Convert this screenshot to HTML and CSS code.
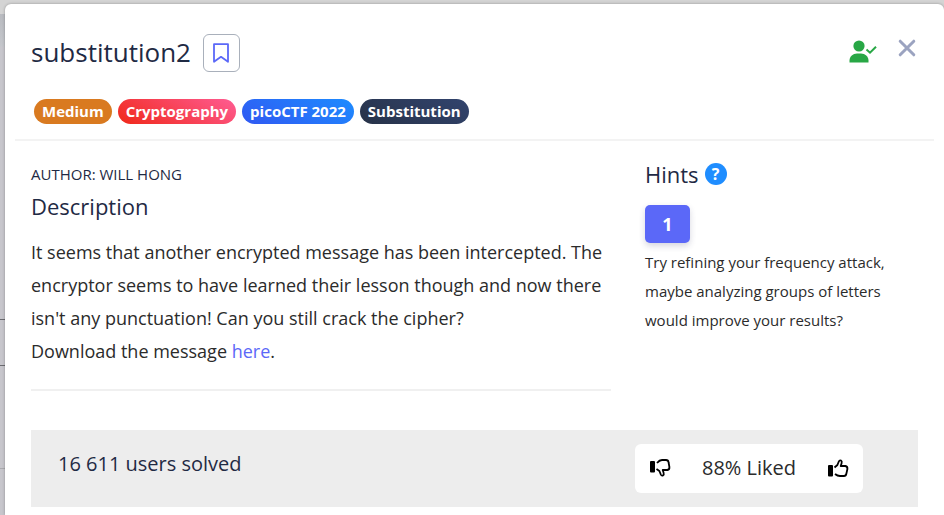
FILE: index.html
```html
<!DOCTYPE html>
<html lang="en">
<head>
<meta charset="utf-8">
<meta name="viewport" content="width=device-width, initial-scale=1">
<title>substitution2</title>
<link rel="stylesheet" href="styles.css">
</head>
<body>
<main class="modal">
  <header class="modal-header">
    <div class="title-row">
      <h1 class="title">substitution2</h1>
      <button class="bookmark" type="button" aria-label="Bookmark">
        <svg width="16" height="20" viewBox="0 0 16 20" fill="none" stroke="currentColor" stroke-width="1.8" stroke-linejoin="round"><path d="M1 1.2h14v17.6l-7-5-7 5z"/></svg>
      </button>
      <div class="header-actions">
        <svg class="solved" width="28" height="23" viewBox="0 0 28 23" role="img" aria-label="Solved"><circle cx="10" cy="6" r="5.6" fill="currentColor"/><path d="M0.5 22.5v-2c0-4 3.500-7 7.500-7h4c4 0 7.500 3 7.500 7v2z" fill="currentColor"/><path d="M17.500 9.500l3.500 3.200 6-6" fill="none" stroke="currentColor" stroke-width="2"/></svg>
        <button class="close" type="button" aria-label="Close">
          <svg width="18" height="18" viewBox="0 0 18 18" fill="none" stroke="currentColor" stroke-width="3" stroke-linecap="round"><path d="M2.200 2.200l13.600 13.600M15.800 2.200L2.200 15.800"/></svg>
        </button>
      </div>
    </div>
    <div class="tags">
      <span class="tag tag-medium">Medium</span>
      <span class="tag tag-category">Cryptography</span>
      <span class="tag tag-event">picoCTF 2022</span>
      <span class="tag tag-topic">Substitution</span>
    </div>
  </header>
  <div class="content">
    <section class="details">
      <p class="author">AUTHOR: WILL HONG</p>
      <h2 class="heading">Description</h2>
      <p class="description">It seems that another encrypted message has been intercepted. The encryptor seems to have learned their lesson though and now there isn't any punctuation! Can you still crack the cipher?<br>Download the message <a href="#">here</a>.</p>
    </section>
    <aside class="hints">
      <h2 class="heading hints-heading">Hints <span class="help">?</span></h2>
      <button class="hint-number" type="button">1</button>
      <p class="hint-text">Try refining your frequency attack, maybe analyzing groups of letters would improve your results?</p>
    </aside>
  </div>
  <footer class="stats">
    <p class="solves">16 611 users solved</p>
    <div class="rating">
      <button class="vote" type="button" aria-label="Dislike">
        <svg width="22" height="20" viewBox="0 0 22 20"><rect x="1" y="3" width="5" height="11.500" rx="1" fill="currentColor"/><path d="M8 5q2.500-3 5-3h4q2.300 0 2.600 2.500l.8 4.500q.3 2.500-2 3h-4.700l.9 2.800q.6 2-.6 2.700-1.500.6-2.200-1L10.400 13 7.500 11" fill="none" stroke="currentColor" stroke-width="1.800" stroke-linejoin="round"/></svg>
      </button>
      <span>88% Liked</span>
      <button class="vote" type="button" aria-label="Like">
        <svg width="22" height="20" viewBox="0 0 22 20"><rect x="1" y="7" width="5" height="11.500" rx="1" fill="currentColor"/><path d="M8 16q2.500 2 5 2h4q2 0 2.400-2.500l1-4.500q.3-2.500-2-3h-4.700l.9-2.800q.6-2-.6-2.700-1.500-.6-2.200 1L10.400 7 7.500 9.500" fill="none" stroke="currentColor" stroke-width="1.800" stroke-linejoin="round"/></svg>
      </button>
    </div>
  </footer>
</main>
</body>
</html>
```
FILE: styles.css
```css
* { box-sizing: border-box; }

body {
  margin: 0;
  min-height: 100vh;
  padding: 4px 0 0 5px;
  display: flex;
  background:
    linear-gradient(#6b6b70, #6b6b70) 0 319px / 5px 1px no-repeat,
    linear-gradient(#6b6b70, #6b6b70) 0 365px / 5px 1px no-repeat,
    linear-gradient(#aaaaae, #aaaaae) 0 468px / 5px 1px no-repeat,
    linear-gradient(#d4d4d4 0 14px, #b9bbc0 14px, #c4c6cb 46px, #c7c6cc 47px);
  color: #1f2a44;
  font-family: "Open Sans", "Noto Sans", sans-serif;
}

h1, h2, p { margin: 0; font-weight: 400; }

button {
  padding: 0;
  border: 0;
  background: none;
  color: inherit;
  font: inherit;
  cursor: pointer;
}

svg { display: block; }

.modal {
  flex: 1;
  padding: 0 10px 8px;
  border-radius: 6px 6px 0 0;
  background: #fff;
  box-shadow: 0 0 3px rgba(0, 0, 0, 0.3);
}

.modal-header {
  padding: 30px 16px 15px;
  border-bottom: 2px solid #f3f3f3;
}

.title-row {
  display: flex;
  align-items: center;
  gap: 12px;
}

.title { font-size: 26px; line-height: 36px; padding-bottom: 2px; }

.bookmark {
  display: grid;
  place-items: center;
  width: 37px;
  height: 38px;
  border: 1px solid #a9b0bb;
  border-radius: 6px;
  color: #5b68f8;
}

.header-actions {
  display: flex;
  align-items: center;
  gap: 21px;
  margin: 0 2px 4px auto;
}

.solved { color: #28a745; }

.close {
  margin-bottom: 6px;
  color: #9ba3c0;
}

.tags {
  display: flex;
  flex-wrap: wrap;
  gap: 6px;
  margin: 27px 3px 0;
}

.tag {
  padding: 0 8px 1px;
  border-radius: 13px;
  color: #fff;
  font-size: 15px;
  font-weight: 700;
  line-height: 24px;
}

.tag-medium { background: #d97a20; }
.tag-category { background: linear-gradient(30deg, #f02819, #ff5c93); }
.tag-event { background: linear-gradient(30deg, #3058f2, #1d8cff); }
.tag-topic { background: linear-gradient(30deg, #273248, #32446e); }

.content {
  display: grid;
  grid-template-columns: 580fr 273fr;
  gap: 34px;
  padding: 17px 16px 0;
}

.details {
  padding-bottom: 21px;
  border-bottom: 2px solid #f0f0f0;
}

.author { font-size: 15px; line-height: 32px; }

.heading { font-size: 22px; line-height: 32px; }

.description {
  margin-top: 14px;
  color: #2b2b2b;
  font-size: 18px;
  line-height: 33px;
}

.description a { color: #5b68f8; text-decoration: none; }

.hints-heading {
  display: flex;
  align-items: center;
  gap: 6px;
}

.help {
  width: 22px;
  border-radius: 50%;
  background: #1f8dff;
  color: #fff;
  font-size: 16px;
  font-weight: 700;
  line-height: 22px;
  text-align: center;
}

.hint-number {
  width: 45px;
  height: 38px;
  margin-top: 15px;
  border-radius: 5px;
  background: #5b68f8;
  box-shadow: 0 3px 6px rgba(50, 50, 93, 0.2);
  color: #fff;
  font-size: 18px;
  font-weight: 700;
}

.hint-text {
  margin-top: 5px;
  color: #2b2b2b;
  font-size: 15px;
  line-height: 29px;
}

.stats {
  display: flex;
  justify-content: space-between;
  align-items: flex-start;
  margin: 39px 16px 0;
  padding: 14px 55px 14px 27px;
  background: #ededed;
}

.solves { font-size: 20px; line-height: 40px; }

.rating {
  display: flex;
  justify-content: space-between;
  align-items: center;
  width: 228px;
  height: 49px;
  padding: 0 14px 2px;
  border-radius: 6px;
  background: #fff;
  color: #2b2b2b;
  font-size: 20px;
}

.vote { color: #000; }
```
